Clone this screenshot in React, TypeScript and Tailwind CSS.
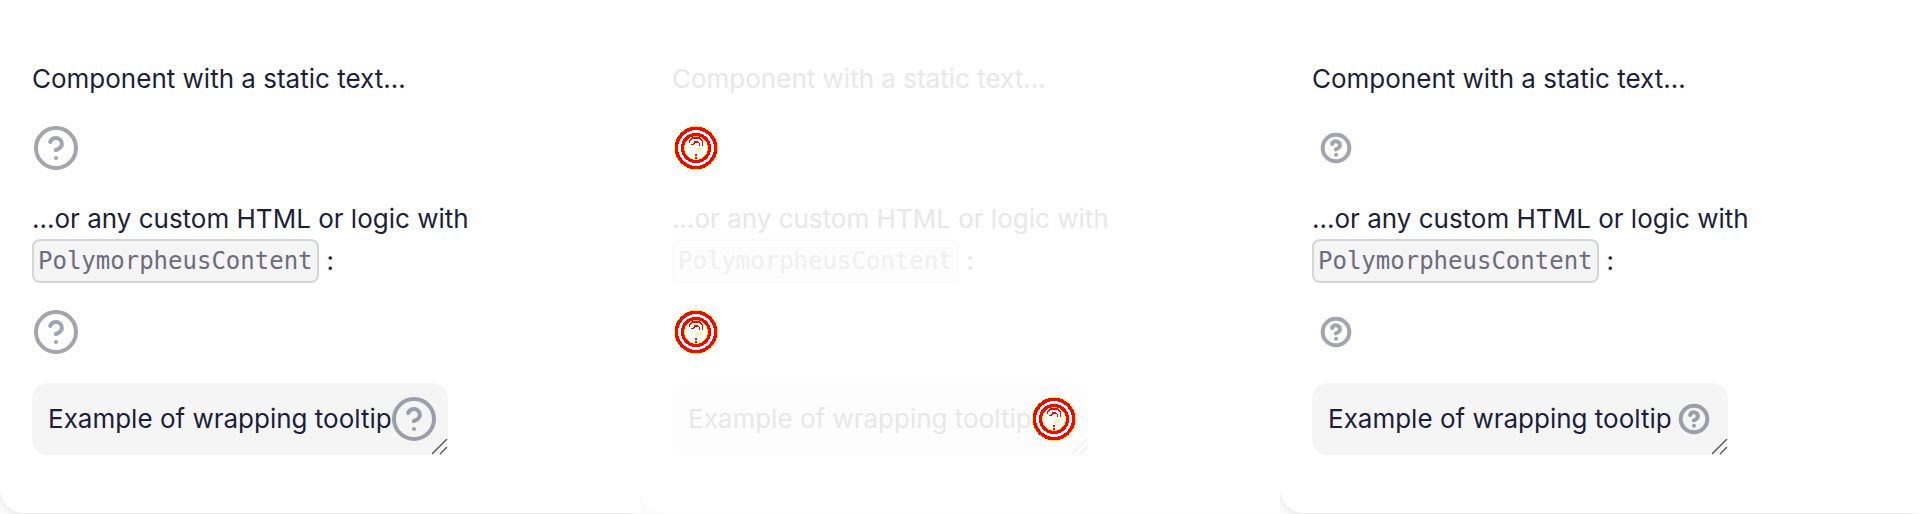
import React from "react";

type Variant = "before" | "diff" | "after";

function HelpIcon({ variant }: { variant: Variant }) {
  if (variant === "diff") {
    return (
      <svg
        viewBox="-24 -24 48 48"
        className="size-12 shrink-0"
        fill="none"
        shapeRendering="crispEdges"
        aria-hidden="true"
      >
        <circle r="21.2" stroke="#ffff00" strokeWidth="1.4" />
        <circle r="12" stroke="#ffff00" strokeWidth="1.2" />
        <circle r="19.6" stroke="#ff0000" strokeWidth="3.4" />
        <circle r="13.5" stroke="#ff0000" strokeWidth="3.2" />
        <path d="M0 4.5C1 3.5 3 2 4 0" stroke="#eeeeee" strokeWidth="4" />
        <path d="M0 3.5L3 2.5L7 -1" stroke="#ffff00" strokeDasharray="1 1" />
        <path d="M-6.5 -5V-7L-3.5 -10H3.5L6.5 -7V-2" stroke="#ff0000" strokeWidth="1.2" />
        <path d="M-5 -3.5H-3L-1 -6H2L3.5 -4.5V-2" stroke="#ff0000" strokeWidth="1.4" />
        <path d="M-1 6H1V8H-1ZM-1 9H1V11H-1Z" fill="#ff0000" />
      </svg>
    );
  }
  const small = variant === "after";
  return (
    <span className="flex size-12 shrink-0 items-center justify-center">
      <svg
        viewBox="0 0 24 24"
        className={small ? "size-8 opacity-40" : "size-12 opacity-40"}
        fill="none"
        stroke="#1b1f3b"
        strokeWidth={small ? 3 : 2}
        strokeLinecap="round"
        strokeLinejoin="round"
        overflow="visible"
        aria-hidden="true"
      >
        <circle cx="12" cy="12" r="10" />
        <path d="M9.09 9a3 3 0 0 1 5.83 1c0 2-3 3-3 3M12 17h.01" />
      </svg>
    </span>
  );
}

function ResizeGrip() {
  return (
    <svg
      viewBox="0 0 16 16"
      className="absolute right-0 bottom-0 size-4"
      stroke="currentColor"
      strokeWidth="1.4"
      aria-hidden="true"
    >
      <path d="M0 15L15 0M8 15L15 8" />
    </svg>
  );
}

function Panel({ variant }: { variant: Variant }) {
  const diff = variant === "diff";
  return (
    <section className={`min-w-0 flex-1 overflow-hidden ${diff ? "bg-[#fbfbfb]" : "bg-white"}`}>
      <div
        className={`rounded-bl-3xl bg-white px-8 pt-[58px] pb-[58px] font-[Inter,sans-serif] text-[26px] leading-[40px] ${
          diff ? "text-[#e8e8e8]" : "text-[#1b1f3b] shadow-[0_4px_12px_rgba(0,0,0,0.1)]"
        }`}
      >
        <p className="pt-px whitespace-nowrap">Component with a static text…</p>
        <button type="button" aria-label="Help" className="mt-[25px] block">
          <HelpIcon variant={variant} />
        </button>
        <p className="mt-[27px] whitespace-nowrap">
          …or any custom HTML or logic with
          <span className="flex items-center gap-2">
            <code
              className={`rounded-lg border-2 px-1 font-['DejaVu_Sans_Mono',monospace] text-[24px] ${
                diff
                  ? "border-[#fafafa] bg-[#fdfdfd] text-[#f0f0f0]"
                  : "border-[#d6d6d6] bg-[#f5f5f5] text-[#6c6c80]"
              }`}
            >
              PolymorpheusContent
            </code>
            :
          </span>
        </p>
        <button type="button" aria-label="More help" className="mt-[25px] block">
          <HelpIcon variant={variant} />
        </button>
        <div
          className={`relative mt-[27px] flex w-[416px] max-w-full items-center rounded-2xl py-3 pr-2.5 pl-4 ${
            diff ? "bg-[#fdfdfd]" : "bg-[#f5f5f5]"
          }`}
        >
          <span className="min-w-0 flex-1 whitespace-nowrap">Example of wrapping tooltip</span>
          <HelpIcon variant={variant} />
          <span className={diff ? "text-[#eeeeee]" : "text-[#555555]"}>
            <ResizeGrip />
          </span>
        </div>
      </div>
    </section>
  );
}

export default function App() {
  return (
    <main className="flex min-h-screen bg-white">
      <Panel variant="before" />
      <Panel variant="diff" />
      <Panel variant="after" />
    </main>
  );
}
